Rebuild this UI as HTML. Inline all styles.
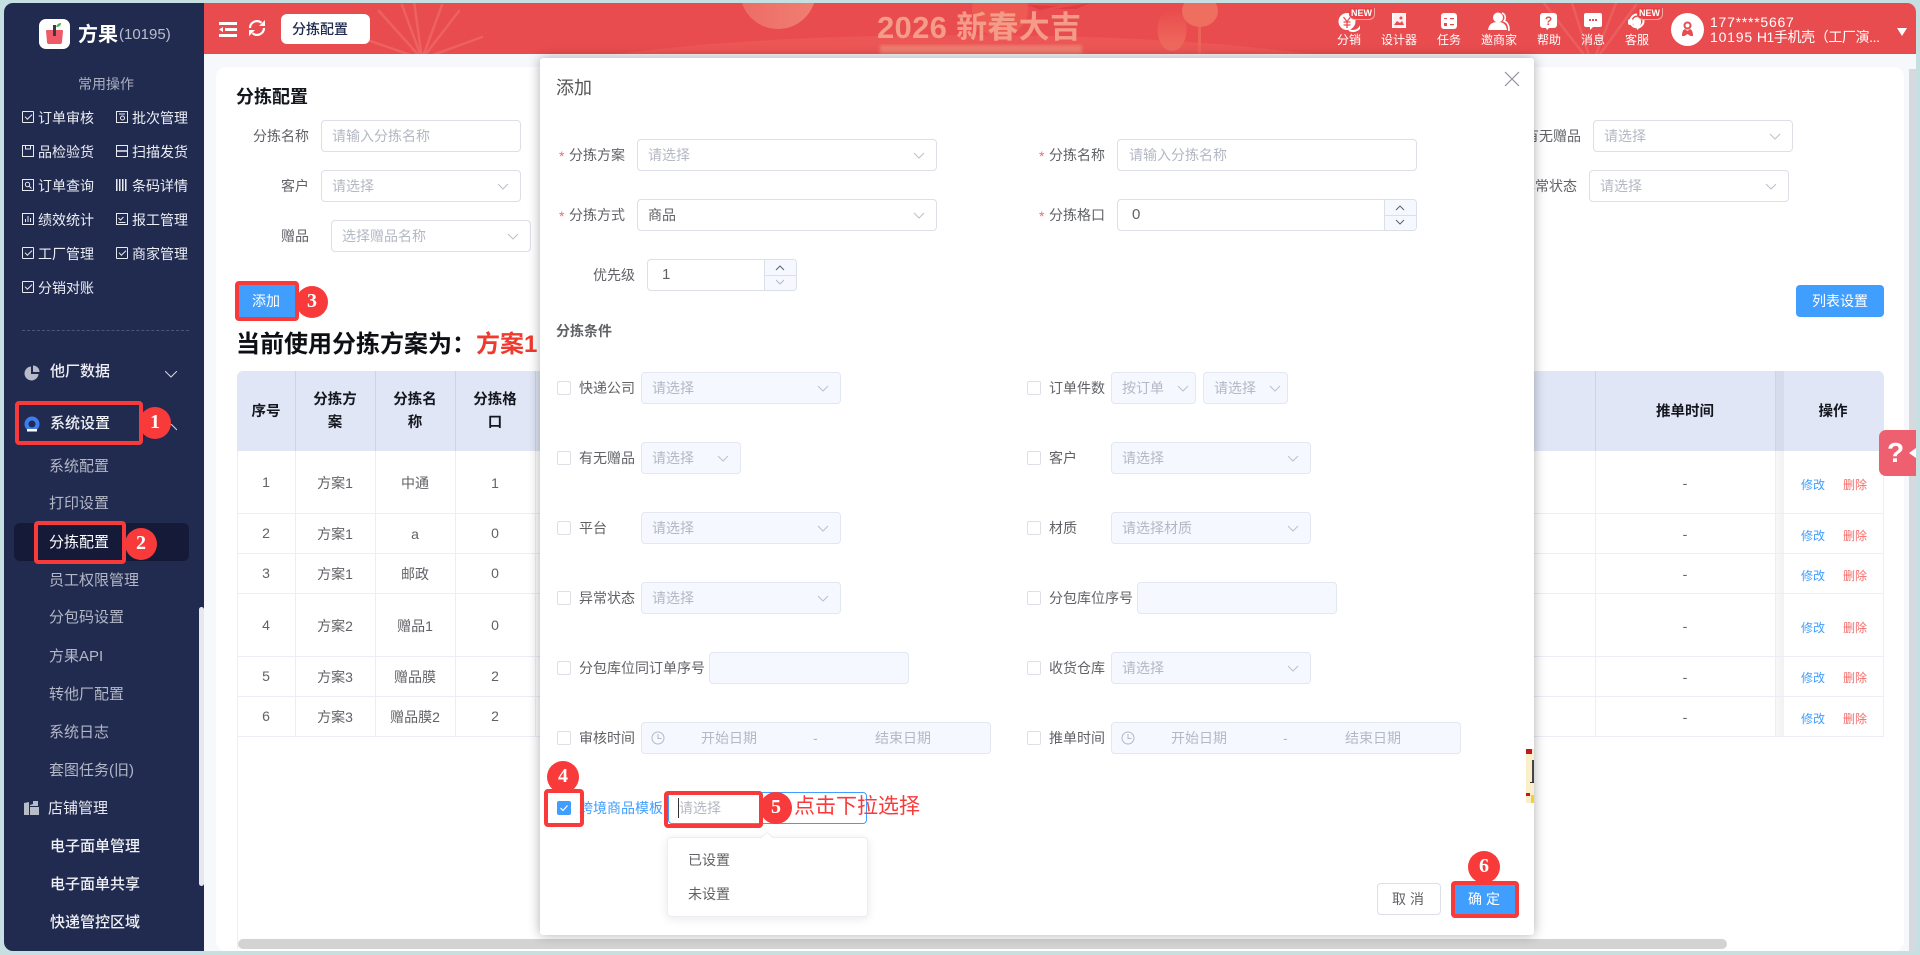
<!DOCTYPE html>
<html lang="zh-CN"><head><meta charset="utf-8"><title>分拣配置</title>
<style>
*{box-sizing:border-box}
html,body{margin:0;padding:0;width:1920px;height:955px;overflow:hidden;background:#c6dfe1;font-family:"Liberation Sans","Noto Sans CJK SC",sans-serif;font-size:14px;color:#606266}
.a{position:absolute}
.t{position:absolute;white-space:nowrap;line-height:20px}
.q{color:#eceef4}.m{font-size:15px;color:#b3b7c6}.w{font-size:15px;color:#f0f1f6}
.qi{position:absolute;width:12px;height:12px;border:1px solid #e8eaf0;border-radius:1px}
.qi:after{content:"";position:absolute;left:2px;top:2px;width:6px;height:3px;border-left:1px solid #e8eaf0;border-bottom:1px solid #e8eaf0;transform:rotate(-45deg)}
.qs{position:absolute;width:12px;height:12px;fill:none;stroke:#e8eaf0;stroke-width:1}
.i{position:absolute;height:32px;border:1px solid #dcdfe8;border-radius:4px;background:#fff;color:#b4b8c4;line-height:30px;padding-left:10px;white-space:nowrap}
.d{background:#f5f8fe;border-color:#e3e7f1}
.c{position:absolute;right:11px;top:12px;width:12px;height:7px;fill:none;stroke:#bcc0cb;stroke-width:1}
.b{position:absolute;width:32px;height:32px;border-radius:50%;background:#f83a3a;color:#fff;text-align:center;font:bold 20px/31px "Liberation Serif",serif;z-index:9}
.r{position:absolute;border:4px solid #f83a3a;border-radius:4px;z-index:8}
.cb{position:absolute;width:14px;height:14px;border:1px solid #dcdfe6;border-radius:2px;background:#fff}
.h{position:absolute;top:371px;height:80px;background:#e1e6f6}
.th{position:absolute;font-weight:bold;font-size:14.500px;color:#15171f;line-height:23px;text-align:center;white-space:nowrap}
.td{position:absolute;width:80px;text-align:center;line-height:20px;white-space:nowrap}
.vl{position:absolute;width:1px;background:#ebeef5}
.hl{position:absolute;height:1px;background:#ebeef5}
.ic{position:absolute;fill:#fff}
.nl{position:absolute;top:30px;width:60px;text-align:center;font-size:12px;color:#fff;line-height:20px}
.new{position:absolute;top:8px;width:26px;height:12px;background:#e94348;border:1px solid #f7a7a4;border-top:0;border-left:0;border-radius:0 0 6px 6px;color:#fff;font:bold 9px/11px "Liberation Sans",sans-serif;text-align:center}
.st{position:absolute;color:#f56c6c;line-height:20px}
.sp{position:absolute;border-left:1px solid #dcdfe8;background:#f5f8fe}
</style></head><body>

<!-- Sidebar -->
<div class="a" style="left:4px;top:3px;width:200px;height:948px;background:#212b4f;border-radius:9px 0 0 9px"></div>
<div class="a" style="left:39px;top:19px;width:31px;height:30px;background:#fff;border-radius:7px"></div>
<svg class="a" style="left:39px;top:19px" width="31" height="30"><path d="M8 11h15a1 1 0 0 1 1 1l-1 11a2 2 0 0 1-2 2H10a2 2 0 0 1-2-2L7 12a1 1 0 0 1 1-1z" fill="#ee5a68"/><rect x="14" y="6" width="3" height="11" fill="#3a3a46"/><path d="M17 8c1-3 3-4 5-4 0 3-2 4-5 4z" fill="#4fb552"/></svg>
<div class="t" style="left:78px;top:24px;font-size:20px;font-weight:bold;color:#fff;line-height:22px">方果</div>
<div class="t" style="left:119px;top:24px;font-size:15px;color:#b9bece;line-height:22px">(10195)</div>
<div class="t" style="left:78px;top:74px;color:#a9afc0">常用操作</div>

<div class="qi" style="left:22px;top:111px"></div><div class="t q" style="left:38px;top:108px">订单审核</div>
<svg class="qs" style="left:116px;top:111px" viewBox="0 0 12 12"><rect x=".5" y=".5" width="11" height="11"/><path d="M3 3h6"/><circle cx="6.500" cy="7" r="2"/></svg><div class="t q" style="left:132px;top:108px">批次管理</div>
<svg class="qs" style="left:22px;top:145px" viewBox="0 0 12 12"><rect x=".5" y=".5" width="11" height="11"/><path d="M3.500 .5v3.500h5V.500"/></svg><div class="t q" style="left:38px;top:142px">品检验货</div>
<svg class="qs" style="left:116px;top:145px" viewBox="0 0 12 12"><rect x=".5" y=".5" width="11" height="11"/><path d="M0 6h12" stroke-width="1.500"/></svg><div class="t q" style="left:132px;top:142px">扫描发货</div>
<svg class="qs" style="left:22px;top:179px" viewBox="0 0 12 12"><rect x=".5" y=".5" width="11" height="11"/><circle cx="5.500" cy="5.500" r="2.200"/><path d="M7 7l2.500 2.500"/></svg><div class="t q" style="left:38px;top:176px">订单查询</div>
<div class="a" style="left:116px;top:179px;width:12px;height:12px;background:repeating-linear-gradient(90deg,#e8eaf0 0 1.5px,transparent 1.5px 3px)"></div><div class="t q" style="left:132px;top:176px">条码详情</div>
<svg class="qs" style="left:22px;top:213px" viewBox="0 0 12 12"><rect x=".5" y=".5" width="11" height="11"/><path d="M3.500 9V6M6 9V3M8.500 9V5"/></svg><div class="t q" style="left:38px;top:210px">绩效统计</div>
<svg class="qs" style="left:116px;top:213px" viewBox="0 0 12 12"><path d="M.5.500h11v11H.5z"/><path d="M2.500 5l2 2 3-3M2.500 9.500h7"/></svg><div class="t q" style="left:132px;top:210px">报工管理</div>
<div class="qi" style="left:22px;top:247px"></div><div class="t q" style="left:38px;top:244px">工厂管理</div>
<div class="qi" style="left:116px;top:247px"></div><div class="t q" style="left:132px;top:244px">商家管理</div>
<div class="qi" style="left:22px;top:281px"></div><div class="t q" style="left:38px;top:278px">分销对账</div>
<div class="a" style="left:22px;top:330px;width:167px;border-top:1px dashed #4c5575"></div>

<svg class="a" style="left:24px;top:365px" width="16" height="16"><path d="M7 1.500A7 7 0 1 0 14.500 9H7z" fill="#b8bcc9"/><path d="M9 .5A6.500 6.500 0 0 1 15.500 7H9z" fill="#b8bcc9"/></svg>
<div class="t w" style="left:50px;top:362px;font-weight:500">他厂数据</div>
<svg class="a" style="left:165px;top:371px" width="12" height="7"><path d="M0 0l6 6 6-6" fill="none" stroke="#d5d8e2" stroke-width="1"/></svg>
<svg class="a" style="left:24px;top:416px" width="16" height="16"><circle cx="8" cy="8" r="5.500" fill="none" stroke="#3f7cf0" stroke-width="4"/><path d="M3 13h10v2.500H3z" fill="#fff"/></svg>
<div class="t w" style="left:50px;top:414px;font-weight:500">系统设置</div>
<svg class="a" style="left:165px;top:424px" width="12" height="7"><path d="M0 6l6-6 6 6" fill="none" stroke="#d5d8e2" stroke-width="1"/></svg>
<div class="r" style="left:15px;top:401px;width:128px;height:44px"></div>
<div class="b" style="left:139px;top:407px">1</div>

<div class="t m" style="left:49px;top:457px">系统配置</div>
<div class="t m" style="left:49px;top:494px">打印设置</div>
<div class="a" style="left:14px;top:523px;width:175px;height:38px;background:#141a38;border-radius:6px"></div>
<div class="t" style="left:49px;top:533px;font-size:15px;color:#fff">分拣配置</div>
<div class="r" style="left:34px;top:521px;width:92px;height:43px"></div>
<div class="b" style="left:125px;top:528px">2</div>
<div class="t m" style="left:49px;top:571px">员工权限管理</div>
<div class="t m" style="left:49px;top:608px">分包码设置</div>
<div class="t m" style="left:49px;top:647px">方果API</div>
<div class="t m" style="left:49px;top:685px">转他厂配置</div>
<div class="t m" style="left:49px;top:723px">系统日志</div>
<div class="t m" style="left:49px;top:761px">套图任务(旧)</div>
<svg class="a" style="left:24px;top:801px" width="15" height="15"><path d="M0 2l5-1v13H0zM6 4l3-1V0h5v5H6zM6 6h9v8H6z" fill="#b8bcc9"/></svg>
<div class="t w" style="left:48px;top:799px;color:#e6e8ef">店铺管理</div>
<div class="t w" style="left:50px;top:837px;font-weight:500">电子面单管理</div>
<div class="t w" style="left:50px;top:875px;font-weight:500">电子面单共享</div>
<div class="t w" style="left:50px;top:913px;font-weight:500">快递管控区域</div>
<div class="a" style="left:199px;top:607px;width:5px;height:279px;background:#e6e8ee;border-radius:3px"></div>

<!-- Main -->
<div class="a" style="left:204px;top:54px;width:1712px;height:897px;background:#f6f8fc"></div>
<div class="a" style="left:216px;top:67px;width:1688px;height:884px;background:#fff;border-radius:10px"></div>
<div class="a" style="left:1909px;top:69px;width:7px;height:882px;background:#d6d9df"></div>

<!-- Header -->
<div class="a" style="left:204px;top:3px;width:1712px;height:51px;background:#e94c4f;border-radius:0 9px 0 0;overflow:hidden">
<svg width="1712" height="51" style="position:absolute;left:0;top:0">
<defs>
<linearGradient id="g1" x1="0" x2="1"><stop offset="0" stop-color="#ed6c66"/><stop offset="1" stop-color="#ef7f71"/></linearGradient>
<linearGradient id="g2" x1="0" y1="0" x2="0" y2="1"><stop offset="0" stop-color="#ea4b4c"/><stop offset="1" stop-color="#ee6d5f"/></linearGradient>
<filter id="bl"><feGaussianBlur stdDeviation="1.500"/></filter>
</defs>
<circle cx="574" cy="-12" r="38" fill="url(#g1)"/>
<circle cx="796" cy="6" r="28" fill="#ec5a52"/>
<ellipse cx="760" cy="82" rx="440" ry="50" fill="#ec5655"/>
<g stroke="#ed6261" stroke-width="2.500" stroke-linecap="round">
<line x1="218" y1="56" x2="175" y2="8"/><line x1="218" y1="56" x2="198" y2="2"/><line x1="218" y1="56" x2="210" y2="-2"/><line x1="218" y1="56" x2="238" y2="2"/><line x1="218" y1="56" x2="255" y2="8"/><line x1="218" y1="56" x2="278" y2="34"/><line x1="218" y1="56" x2="155" y2="34"/></g>
<g stroke="#ec5e5e" stroke-width="2.500" stroke-linecap="round">
<line x1="1388" y1="62" x2="1340" y2="0"/><line x1="1388" y1="62" x2="1368" y2="0"/><line x1="1388" y1="62" x2="1412" y2="0"/><line x1="1388" y1="62" x2="1432" y2="2"/></g>
<ellipse cx="968" cy="27" rx="14.500" ry="21" fill="url(#g2)"/>
<ellipse cx="996" cy="8" rx="18" ry="16" fill="#ee6f5f"/><rect x="994" y="24" width="3" height="27" fill="#ed6259"/>
<path d="M824 2l30 1-18 4zM850 6l36-6-14 6z" fill="#e03d42"/>
<rect x="676" y="42" width="202" height="9" fill="#ee7b70" filter="url(#bl)"/>
</svg>
<div class="t" style="left:673px;top:6px;font-size:31px;font-weight:bold;line-height:38px;color:#f59b8a;letter-spacing:.3px">2026 新春大吉</div>
</div>
<svg class="a" style="left:219px;top:22px" width="18" height="15"><path d="M0 0h18v3H0zM6 6h12v3H6zM0 12h18v3H0zM4 5v5L0 7.500z" fill="#fff"/></svg>
<svg class="a" style="left:248px;top:19px" width="18" height="18" fill="none" stroke="#fff" stroke-width="2.200"><path d="M2 9A7 7 0 0 1 13.500 3.800"/><path d="M16 9A7 7 0 0 1 4.500 14.200"/><path d="M17 1v6h-6zM1 17v-6h6z" stroke="none" fill="#fff"/></svg>
<div class="a" style="left:281px;top:14px;width:89px;height:30px;background:#fff;border-radius:6px"></div>
<div class="t" style="left:292px;top:19px;color:#212b4f;font-weight:500">分拣配置</div>

<svg class="ic" style="left:1338px;top:12px" width="22" height="20"><path d="M19 3a8.500 8.500 0 0 1-8 15" fill="none" stroke="#fff" stroke-width="2"/><circle cx="9" cy="9.500" r="8.500"/><path d="M5.500 5L9 9.500 12.500 5M5.500 10h7M5.500 13h7M9 9.500V16" stroke="#e94c4f" stroke-width="1.300" fill="none"/></svg>
<div class="new" style="left:1349px">NEW</div>
<div class="nl" style="left:1319px">分销</div>
<svg class="ic" style="left:1392px;top:13px" width="15" height="16"><rect x=".7" y=".7" width="12.600" height="13.600" fill="none" stroke="#fff" stroke-width="1.400"/><rect x="1" y="1" width="12" height="13" fill="#fff" opacity=".9"/><path d="M2 12l3-4 3 2 2-2 2 4z" fill="#e94c4f"/><circle cx="9" cy="5" r="1.500" fill="#e94c4f"/></svg>
<div class="nl" style="left:1369px">设计器</div>
<svg class="ic" style="left:1441px;top:13px" width="16" height="16"><rect width="16" height="16" rx="3" fill="#fff"/><path d="M3 5h3v1H3zM3 10h3v3H3zM9 5h4v1.200H9zM9 11h4v1.200H9z" fill="#e94c4f"/></svg>
<div class="nl" style="left:1419px">任务</div>
<svg class="ic" style="left:1488px;top:12px" width="22" height="19"><circle cx="10" cy="5.500" r="5"/><path d="M0 18c1-6 4-8 10-8s8 3 9 8z"/><path d="M14 1a5 5 0 0 1 2 8c3 1 5 4 5 9h-1" fill="none" stroke="#fff" stroke-width="1.600"/></svg>
<div class="nl" style="left:1469px">邀商家</div>
<svg class="ic" style="left:1540px;top:13px" width="17" height="17"><path d="M3 0h11a3 3 0 0 1 3 3v9a3 3 0 0 1-3 3H9l-2 2-1-2H3a3 3 0 0 1-3-3V3a3 3 0 0 1 3-3z"/><text x="8.500" y="12" font-size="12" font-weight="bold" fill="#e94c4f" text-anchor="middle" font-family="Liberation Sans">?</text></svg>
<div class="nl" style="left:1519px">帮助</div>
<svg class="ic" style="left:1584px;top:13px" width="18" height="17"><path d="M2 0h14a2 2 0 0 1 2 2v10a2 2 0 0 1-2 2H9l-3 3v-3H2a2 2 0 0 1-2-2V2a2 2 0 0 1 2-2z"/><path d="M5 6h2v2H5zM8 6h2v2H8zM11 6h2v2h-2z" fill="#e94c4f"/></svg>
<div class="nl" style="left:1563px">消息</div>
<svg class="ic" style="left:1628px;top:13px" width="19" height="18"><circle cx="9" cy="8" r="6.500" fill="none" stroke="#fff" stroke-width="2"/><rect x="0" y="6" width="5" height="6" rx="2"/><rect x="5" y="4" width="8" height="10" rx="4"/><path d="M13 14l-4 3v-3z"/></svg>
<div class="new" style="left:1637px">NEW</div>
<div class="nl" style="left:1607px">客服</div>
<div class="a" style="left:1671px;top:13px;width:33px;height:33px;border-radius:50%;background:#fff"></div>
<svg class="a" style="left:1681px;top:21px" width="13" height="16"><circle cx="6.500" cy="4.500" r="3" fill="none" stroke="#e94c4f" stroke-width="2"/><path d="M1 15c0-5 1.500-6.500 3-7l2.500 2L9 8c1.500.5 3 2 3 7h-2.500L6.500 13 3.500 15z" fill="#e94c4f"/></svg>
<div class="t" style="left:1710px;top:12px;color:#fff;font-size:14px;letter-spacing:.75px">177****5667</div>
<div class="t" style="left:1710px;top:27px;color:#fff;font-size:14px"><span style="letter-spacing:.8px">10195</span> <span style="letter-spacing:-.4px">H1手机壳（工厂演...</span></div>
<svg class="a" style="left:1897px;top:28px" width="10" height="8"><path d="M0 0h10L5 8z" fill="#fff"/></svg>

<!-- Filters -->
<div class="t" style="left:236px;top:87px;font-size:18px;font-weight:bold;color:#15171f">分拣配置</div>
<div class="t" style="left:253px;top:126px">分拣名称</div><div class="i" style="left:321px;top:120px;width:200px">请输入分拣名称</div>
<div class="t" style="left:281px;top:176px">客户</div><div class="i" style="left:321px;top:170px;width:200px">请选择<svg class="c"><path d="M1 1l5 5 5-5"/></svg></div>
<div class="t" style="left:281px;top:226px">赠品</div><div class="i" style="left:331px;top:220px;width:200px">选择赠品名称<svg class="c"><path d="M1 1l5 5 5-5"/></svg></div>
<div class="t" style="left:1525px;top:126px">有无赠品</div><div class="i" style="left:1593px;top:120px;width:200px">请选择<svg class="c"><path d="M1 1l5 5 5-5"/></svg></div>
<div class="t" style="left:1521px;top:176px">异常状态</div><div class="i" style="left:1589px;top:170px;width:200px">请选择<svg class="c"><path d="M1 1l5 5 5-5"/></svg></div>

<div class="a" style="left:239px;top:285px;width:54px;height:32px;background:#409eff;color:#fff;text-align:center;line-height:32px;box-shadow:2px 0 0 #409eff">添加</div>
<div class="r" style="left:235px;top:281px;width:64px;height:40px"></div>
<div class="b" style="left:296px;top:286px">3</div>
<div class="a" style="left:1796px;top:285px;width:88px;height:32px;background:#409eff;color:#fff;text-align:center;line-height:32px;border-radius:4px">列表设置</div>

<div class="t" style="left:236px;top:328px;font-size:24px;font-weight:bold;line-height:34px;color:#0e0f14">当前使用分拣方案为：</div>
<div class="t" style="left:476px;top:328px;font-size:24px;font-weight:bold;line-height:34px;color:#f03a2e">方案1</div>

<!-- Table -->
<div class="h" style="left:237px;width:1647px;border-radius:6px 6px 0 0"></div>
<div class="vl" style="left:237px;top:451px;height:498px"></div>
<div class="vl" style="left:295px;top:451px;height:285px"></div>
<div class="vl" style="left:375px;top:451px;height:285px"></div>
<div class="vl" style="left:455px;top:451px;height:285px"></div>
<div class="vl" style="left:535px;top:451px;height:285px"></div>
<div class="vl" style="left:1595px;top:451px;height:285px"></div>
<div class="vl" style="left:1775px;top:451px;height:285px"></div>
<div class="vl" style="left:1883px;top:451px;height:285px"></div>
<div class="vl" style="left:295px;top:371px;height:80px;background:#cfd4e4"></div>
<div class="vl" style="left:375px;top:371px;height:80px;background:#cfd4e4"></div>
<div class="vl" style="left:455px;top:371px;height:80px;background:#cfd4e4"></div>
<div class="vl" style="left:535px;top:371px;height:80px;background:#cfd4e4"></div>
<div class="vl" style="left:1595px;top:371px;height:80px;background:#cfd4e4"></div>
<div class="vl" style="left:1775px;top:371px;height:80px;background:#cfd4e4"></div>
<div class="a" style="left:1776px;top:371px;width:8px;height:80px;background:#d6dcec"></div>
<div class="a" style="left:1776px;top:451px;width:8px;height:285px;background:linear-gradient(90deg,rgba(0,0,0,.03),rgba(0,0,0,.05))"></div>
<div class="hl" style="left:237px;top:513px;width:1647px"></div>
<div class="hl" style="left:237px;top:553px;width:1647px"></div>
<div class="hl" style="left:237px;top:593px;width:1647px"></div>
<div class="hl" style="left:237px;top:656px;width:1647px"></div>
<div class="hl" style="left:237px;top:696px;width:1647px"></div>
<div class="hl" style="left:237px;top:736px;width:1647px"></div>
<div class="a" style="left:238px;top:939px;width:1489px;height:10px;background:#d3d3d3;border-radius:5px"></div>

<div class="th" style="left:237px;top:401px;width:58px">序号</div>
<div class="th" style="left:295px;top:389px;width:80px">分拣方<br>案</div>
<div class="th" style="left:375px;top:389px;width:80px">分拣名<br>称</div>
<div class="th" style="left:455px;top:389px;width:80px">分拣格<br>口</div>
<div class="th" style="left:1595px;top:401px;width:180px">推单时间</div>
<div class="th" style="left:1784px;top:401px;width:98px">操作</div>

<div class="td" style="left:226px;top:472px">1</div><div class="td" style="left:295px;top:473px">方案1</div><div class="td" style="left:375px;top:473px">中通</div><div class="td" style="left:455px;top:473px">1</div>
<div class="td" style="left:226px;top:523px">2</div><div class="td" style="left:295px;top:524px">方案1</div><div class="td" style="left:375px;top:524px">a</div><div class="td" style="left:455px;top:523px">0</div>
<div class="td" style="left:226px;top:563px">3</div><div class="td" style="left:295px;top:564px">方案1</div><div class="td" style="left:375px;top:564px">邮政</div><div class="td" style="left:455px;top:563px">0</div>
<div class="td" style="left:226px;top:615px">4</div><div class="td" style="left:295px;top:616px">方案2</div><div class="td" style="left:375px;top:616px">赠品1</div><div class="td" style="left:455px;top:615px">0</div>
<div class="td" style="left:226px;top:666px">5</div><div class="td" style="left:295px;top:667px">方案3</div><div class="td" style="left:375px;top:667px">赠品膜</div><div class="td" style="left:455px;top:666px">2</div>
<div class="td" style="left:226px;top:706px">6</div><div class="td" style="left:295px;top:707px">方案3</div><div class="td" style="left:375px;top:707px">赠品膜2</div><div class="td" style="left:455px;top:706px">2</div>

<div class="td" style="left:1645px;top:473px">-</div><div class="td" style="left:1645px;top:524px">-</div><div class="td" style="left:1645px;top:564px">-</div><div class="td" style="left:1645px;top:616px">-</div><div class="td" style="left:1645px;top:667px">-</div><div class="td" style="left:1645px;top:707px">-</div>
<div class="t" style="left:1801px;top:475px;font-size:12px;color:#409eff">修改</div><div class="t" style="left:1843px;top:475px;font-size:12px;color:#f56c6c">删除</div>
<div class="t" style="left:1801px;top:526px;font-size:12px;color:#409eff">修改</div><div class="t" style="left:1843px;top:526px;font-size:12px;color:#f56c6c">删除</div>
<div class="t" style="left:1801px;top:566px;font-size:12px;color:#409eff">修改</div><div class="t" style="left:1843px;top:566px;font-size:12px;color:#f56c6c">删除</div>
<div class="t" style="left:1801px;top:618px;font-size:12px;color:#409eff">修改</div><div class="t" style="left:1843px;top:618px;font-size:12px;color:#f56c6c">删除</div>
<div class="t" style="left:1801px;top:668px;font-size:12px;color:#409eff">修改</div><div class="t" style="left:1843px;top:668px;font-size:12px;color:#f56c6c">删除</div>
<div class="t" style="left:1801px;top:709px;font-size:12px;color:#409eff">修改</div><div class="t" style="left:1843px;top:709px;font-size:12px;color:#f56c6c">删除</div>

<!-- Help float -->
<div class="a" style="left:1879px;top:430px;width:37px;height:46px;background:#ee6070;border-radius:7px 0 0 7px;color:#fff;font:bold 28px/46px 'Liberation Sans',sans-serif;padding-left:8px">?</div>
<svg class="a" style="left:1909px;top:448px" width="7" height="10"><path d="M7 0v10L0 5z" fill="#fff"/></svg>

<!-- Dialog -->
<div class="a" style="left:540px;top:58px;width:994px;height:877px;background:#fff;border-radius:3px;box-shadow:0 0 12px rgba(0,0,0,.32)"></div>
<div class="t" style="left:556px;top:76px;font-size:18px;line-height:24px;color:#555">添加</div>
<svg class="a" style="left:1504px;top:71px" width="16" height="16"><path d="M1 1l14 14M15 1L1 15" stroke="#8f929b" stroke-width="1.200" fill="none"/></svg>

<div class="st" style="left:559px;top:146px">*</div><div class="t" style="left:569px;top:145px">分拣方案</div>
<div class="i" style="left:637px;top:139px;width:300px">请选择<svg class="c"><path d="M1 1l5 5 5-5"/></svg></div>
<div class="st" style="left:559px;top:206px">*</div><div class="t" style="left:569px;top:205px">分拣方式</div>
<div class="i" style="left:637px;top:199px;width:300px;color:#606266">商品<svg class="c"><path d="M1 1l5 5 5-5"/></svg></div>
<div class="t" style="left:593px;top:265px">优先级</div>
<div class="i" style="left:647px;top:259px;width:150px;color:#606266;padding-left:14px;font-size:15px">1</div>
<div class="sp" style="left:764px;top:260px;width:32px;height:30px;border-radius:0 3px 3px 0"></div>
<div class="a" style="left:764px;top:275px;width:32px;height:1px;background:#dcdfe8"></div>
<svg class="a" style="left:775px;top:263px" width="10" height="24" fill="none" stroke-width="1"><path d="M1 7l4-4 4 4" stroke="#606266"/><path d="M1 17l4 4 4-4" stroke="#b4b8c4"/></svg>

<div class="st" style="left:1039px;top:146px">*</div><div class="t" style="left:1049px;top:145px">分拣名称</div>
<div class="i" style="left:1117px;top:139px;width:300px;padding-left:11px">请输入分拣名称</div>
<div class="st" style="left:1039px;top:206px">*</div><div class="t" style="left:1049px;top:205px">分拣格口</div>
<div class="i" style="left:1117px;top:199px;width:300px;color:#606266;padding-left:14px;font-size:15px">0</div>
<div class="sp" style="left:1384px;top:200px;width:32px;height:30px;border-radius:0 3px 3px 0"></div>
<div class="a" style="left:1384px;top:215px;width:32px;height:1px;background:#dcdfe8"></div>
<svg class="a" style="left:1395px;top:203px" width="10" height="24" fill="none" stroke="#606266" stroke-width="1"><path d="M1 7l4-4 4 4"/><path d="M1 17l4 4 4-4"/></svg>

<div class="t" style="left:556px;top:321px;font-weight:bold;color:#606266">分拣条件</div>

<div class="cb" style="left:557px;top:381px"></div><div class="t" style="left:579px;top:378px">快递公司</div>
<div class="i d" style="left:641px;top:372px;width:200px">请选择<svg class="c"><path d="M1 1l5 5 5-5"/></svg></div>
<div class="cb" style="left:557px;top:451px"></div><div class="t" style="left:579px;top:448px">有无赠品</div>
<div class="i d" style="left:641px;top:442px;width:100px">请选择<svg class="c"><path d="M1 1l5 5 5-5"/></svg></div>
<div class="cb" style="left:557px;top:521px"></div><div class="t" style="left:579px;top:518px">平台</div>
<div class="i d" style="left:641px;top:512px;width:200px">请选择<svg class="c"><path d="M1 1l5 5 5-5"/></svg></div>
<div class="cb" style="left:557px;top:591px"></div><div class="t" style="left:579px;top:588px">异常状态</div>
<div class="i d" style="left:641px;top:582px;width:200px">请选择<svg class="c"><path d="M1 1l5 5 5-5"/></svg></div>
<div class="cb" style="left:557px;top:661px"></div><div class="t" style="left:579px;top:658px">分包库位同订单序号</div>
<div class="i d" style="left:709px;top:652px;width:200px"></div>
<div class="cb" style="left:557px;top:731px"></div><div class="t" style="left:579px;top:728px">审核时间</div>
<div class="i d" style="left:641px;top:722px;width:350px"></div>
<svg class="a" style="left:651px;top:731px" width="14" height="14" fill="none" stroke="#b4b8c4"><circle cx="7" cy="7" r="6"/><path d="M7 3v4.500h3.500"/></svg>
<div class="t" style="left:701px;top:728px;color:#b4b8c4">开始日期</div><div class="t" style="left:813px;top:728px;color:#b4b8c4">-</div><div class="t" style="left:875px;top:728px;color:#b4b8c4">结束日期</div>

<div class="cb" style="left:1027px;top:381px"></div><div class="t" style="left:1049px;top:378px">订单件数</div>
<div class="i d" style="left:1111px;top:372px;width:85px">按订单<svg class="c" style="right:6px"><path d="M1 1l5 5 5-5"/></svg></div>
<div class="i d" style="left:1203px;top:372px;width:85px">请选择<svg class="c" style="right:6px"><path d="M1 1l5 5 5-5"/></svg></div>
<div class="cb" style="left:1027px;top:451px"></div><div class="t" style="left:1049px;top:448px">客户</div>
<div class="i d" style="left:1111px;top:442px;width:200px">请选择<svg class="c"><path d="M1 1l5 5 5-5"/></svg></div>
<div class="cb" style="left:1027px;top:521px"></div><div class="t" style="left:1049px;top:518px">材质</div>
<div class="i d" style="left:1111px;top:512px;width:200px">请选择材质<svg class="c"><path d="M1 1l5 5 5-5"/></svg></div>
<div class="cb" style="left:1027px;top:591px"></div><div class="t" style="left:1049px;top:588px">分包库位序号</div>
<div class="i d" style="left:1137px;top:582px;width:200px"></div>
<div class="cb" style="left:1027px;top:661px"></div><div class="t" style="left:1049px;top:658px">收货仓库</div>
<div class="i d" style="left:1111px;top:652px;width:200px">请选择<svg class="c"><path d="M1 1l5 5 5-5"/></svg></div>
<div class="cb" style="left:1027px;top:731px"></div><div class="t" style="left:1049px;top:728px">推单时间</div>
<div class="i d" style="left:1111px;top:722px;width:350px"></div>
<svg class="a" style="left:1121px;top:731px" width="14" height="14" fill="none" stroke="#b4b8c4"><circle cx="7" cy="7" r="6"/><path d="M7 3v4.500h3.500"/></svg>
<div class="t" style="left:1171px;top:728px;color:#b4b8c4">开始日期</div><div class="t" style="left:1283px;top:728px;color:#b4b8c4">-</div><div class="t" style="left:1345px;top:728px;color:#b4b8c4">结束日期</div>

<!-- cross border row -->
<div class="a" style="left:557px;top:801px;width:14px;height:14px;background:#409eff;border-radius:2px"></div>
<svg class="a" style="left:557px;top:801px" width="14" height="14"><path d="M3.500 7l2.500 2.500 4.500-5" fill="none" stroke="#fff" stroke-width="1.200"/></svg>
<div class="t" style="left:579px;top:798px;color:#409eff">跨境商品模板</div>
<div class="r" style="left:544px;top:789px;width:40px;height:38px"></div>
<div class="b" style="left:547px;top:761px">4</div>
<div class="a" style="left:668px;top:792px;width:199px;height:32px;border:1px solid #409eff;border-radius:4px;background:#fff"></div>
<div class="a" style="left:678px;top:798px;width:1px;height:20px;background:#333"></div>
<div class="t" style="left:679px;top:798px;color:#b4b8c4">请选择</div>
<div class="r" style="left:664px;top:791px;width:99px;height:37px"></div>
<div class="b" style="left:760px;top:792px">5</div>
<div class="t" style="left:794px;top:794px;font-size:21px;line-height:26px;color:#f83a3a;z-index:10">点击下拉选择</div>

<div class="a" style="left:667px;top:837px;width:201px;height:80px;background:#fff;border:1px solid #ebeef5;border-radius:4px;box-shadow:0 2px 10px rgba(0,0,0,.09)"></div>
<div class="a" style="left:763px;top:833px;width:8px;height:8px;background:#fff;border-left:1px solid #ebeef5;border-top:1px solid #ebeef5;transform:rotate(45deg)"></div>
<div class="t" style="left:688px;top:850px">已设置</div>
<div class="t" style="left:688px;top:884px">未设置</div>

<!-- footer buttons -->
<div class="a" style="left:1377px;top:883px;width:64px;height:32px;background:#fff;border:1px solid #dcdfe6;border-radius:4px;text-align:center;line-height:30px;color:#606266;letter-spacing:4px;text-indent:2px">取消</div>
<div class="a" style="left:1455px;top:885px;width:60px;height:29px;background:#409eff;color:#fff;text-align:center;line-height:29px;letter-spacing:4px;text-indent:2px">确定</div>
<div class="r" style="left:1451px;top:881px;width:68px;height:37px"></div>
<div class="b" style="left:1468px;top:851px">6</div>

<!-- edge image sliver -->
<div class="a" style="left:1526px;top:749px;width:8px;height:54px;background:#fbeecb"></div>
<div class="a" style="left:1526px;top:749px;width:6px;height:5px;background:#c4161c"></div>
<div class="a" style="left:1532px;top:760px;width:2px;height:22px;background:#444"></div>
<div class="a" style="left:1526px;top:793px;width:4px;height:3px;background:#c4161c"></div>
<div class="a" style="left:1531px;top:795px;width:3px;height:8px;background:#f3d22a"></div>
<div class="a" style="left:1530px;top:782px;width:4px;height:1px;background:#333"></div>
</body></html>
